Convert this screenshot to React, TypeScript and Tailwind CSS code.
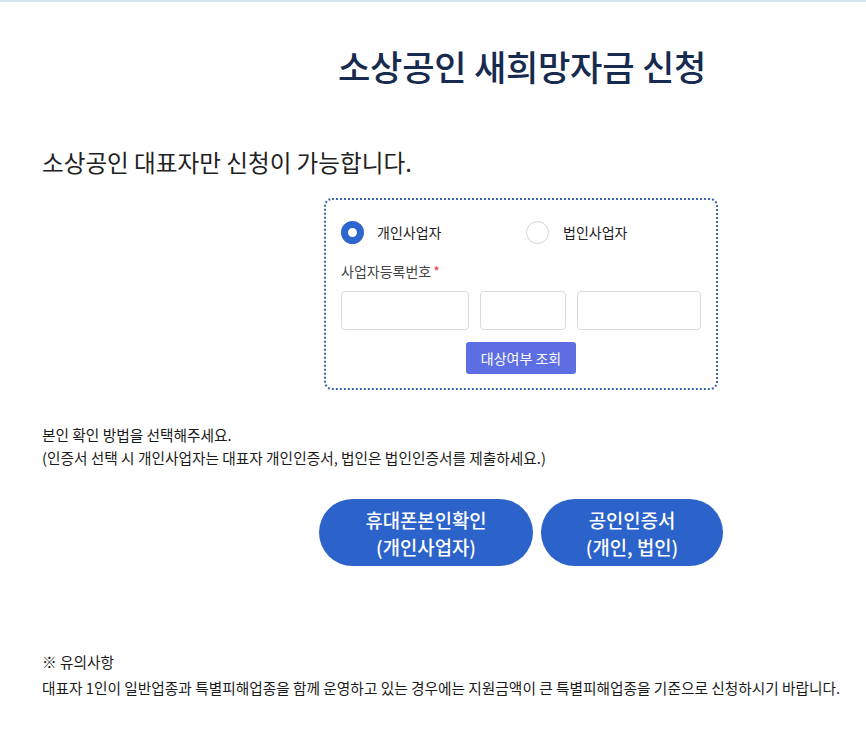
import React from "react";

export default function App() {
  const font = { fontFamily: '"Noto Sans CJK KR", "Noto Sans", sans-serif' };
  return (
    <div className="w-[866px] h-[733px] bg-white overflow-hidden" style={font}>
      <div className="h-[2px] bg-[#d5e6f1]" />
      <div className="pl-[42px]">
        <h1 className="pt-[40px] pl-[296px] text-[35.2px] leading-[48px] font-medium text-[#172a4f] tracking-[-0.3px]">
          소상공인 새희망자금 신청
        </h1>
        <p className="mt-[57px] text-[23.6px] leading-[30px] text-[#222]">소상공인 대표자만 신청이 가능합니다.</p>
        <div className="ml-[282px] mt-[21px] w-[394px] h-[192px] border-2 border-dotted border-[#3d67ab] rounded-[8px] px-[15px] pt-[21px]">
          <div className="flex items-center">
            <div className="flex items-center w-[185px]">
              <span className="w-[23px] h-[23px] rounded-full border-[7px] border-[#2d66cc] bg-white" />
              <span className="ml-[13px] text-[14px] text-[#222]">개인사업자</span>
            </div>
            <div className="flex items-center">
              <span className="w-[23px] h-[23px] rounded-full border border-[#d4d4d4] bg-white" />
              <span className="ml-[14px] text-[14px] text-[#222]">법인사업자</span>
            </div>
          </div>
          <div className="mt-[17px] text-[14px] leading-[20px] text-[#444]">
            사업자등록번호<span className="text-[#e0463c] ml-[2px]">*</span>
          </div>
          <div className="mt-[10px] flex gap-[11px]">
            <div className="w-[129px] h-[39px] border border-[#dcdcdc] rounded-[4px]" />
            <div className="w-[86px] h-[39px] border border-[#dcdcdc] rounded-[4px]" />
            <div className="w-[125px] h-[39px] border border-[#dcdcdc] rounded-[4px]" />
          </div>
          <div className="mt-[12px] flex justify-center">
            <button className="w-[110px] h-[32px] bg-[#5c6ee2] rounded-[3px] text-white text-[14px]">대상여부 조회</button>
          </div>
        </div>
        <p className="mt-[33px] text-[14.7px] leading-[23px] text-[#1a1a1a]">본인 확인 방법을 선택해주세요.</p>
        <p className="text-[14.7px] leading-[23px] text-[#1a1a1a]">(인증서 선택 시 개인사업자는 대표자 개인인증서, 법인은 법인인증서를 제출하세요.)</p>
        <div className="mt-[30px] ml-[277px] flex gap-[8px]">
          <button className="w-[214px] h-[67px] rounded-full bg-[#2b63ca] text-white text-[18.8px] leading-[27px] font-medium">
            휴대폰본인확인<br />(개인사업자)
          </button>
          <button className="w-[182px] h-[67px] rounded-full bg-[#2b63ca] text-white text-[18.8px] leading-[27px] font-medium">
            공인인증서<br />(개인, 법인)
          </button>
        </div>
        <p className="mt-[83px] text-[14.7px] leading-[26px] text-[#1a1a1a]">※ 유의사항</p>
        <p className="text-[14.7px] leading-[26px] text-[#1a1a1a]">대표자 1인이 일반업종과 특별피해업종을 함께 운영하고 있는 경우에는 지원금액이 큰 특별피해업종을 기준으로 신청하시기 바랍니다.</p>
      </div>
    </div>
  );
}
